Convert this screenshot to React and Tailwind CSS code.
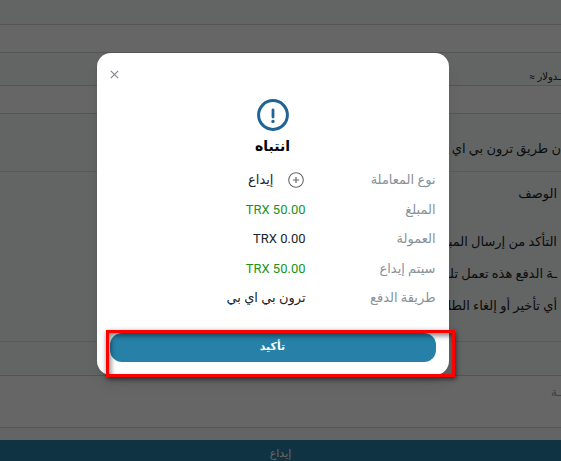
const rows = [
  { label: 'نوع المعاملة', value: 'إيداع', icon: true },
  { label: 'المبلغ', value: 'TRX 50.00', green: true },
  { label: 'العمولة', value: 'TRX 0.00' },
  { label: 'سيتم إيداع', value: 'TRX 50.00', green: true },
  { label: 'طريقة الدفع', value: 'ترون بي اي بي' },
];

const notes = ['التأكد من إرسال المبلـ', 'ـة الدفع هذه تعمل تلـ', 'أي تأخير أو إلغاء الطلب'];

const AlertIcon = () => (
  <svg width="32" height="32" viewBox="0 0 32 32" fill="none" aria-hidden="true">
    <circle cx="16" cy="16" r="14.4" stroke="#1f6496" strokeWidth="3" />
    <path d="M16 11v7" stroke="#1f6496" strokeWidth="2.8" strokeLinecap="round" />
    <circle cx="16" cy="22.4" r="1.7" fill="#1f6496" />
  </svg>
);

const PlusIcon = () => (
  <svg width="16" height="16" viewBox="0 0 16 16" fill="none" stroke="#6b6b6b" aria-hidden="true">
    <circle cx="8" cy="8" r="7.3" strokeWidth="1.1" />
    <path d="M8 5v6M5 8h6" strokeWidth="1.2" />
  </svg>
);

const CloseIcon = () => (
  <svg width="9" height="9" viewBox="0 0 9 9" fill="none" stroke="#808890" aria-hidden="true">
    <path d="M.8.8l7.4 7.4M8.2.8L.8 8.2" strokeWidth="1.2" />
  </svg>
);

const DepositForm = () => (
  <form className="text-[#212529]">
    <div className="h-6" />
    <input
      type="text"
      aria-label="المبلغ"
      className="block h-[29px] w-full border-y border-[#d0d4de] bg-white"
    />
    <label htmlFor="usd" className="flex h-8 items-end text-[10px] leading-4">
      ـدولار ≈
    </label>
    <input id="usd" type="text" className="block h-[29px] w-full border-y border-[#d0d4de] bg-white" />
    <p className="flex h-[58px] items-end border-b border-[#dfe4e4] pb-3 text-[13px] leading-5">
      ن طريق ترون بي اي بي
    </p>
    <section className="h-[170px] border-b border-[#dfe4e4] px-1 pt-3">
      <h2 className="mb-[22px] text-[13px] leading-5">الوصف</h2>
      <ul className="text-[13px] leading-8">
        {notes.map((note) => (
          <li key={note} className="whitespace-nowrap">
            {note}
          </li>
        ))}
      </ul>
    </section>
    <div className="h-[33px]" />
    <textarea
      aria-label="ملاحظة"
      placeholder="ـة"
      className="block h-[53px] w-full resize-none border-y border-[#d0d2d2] bg-white pt-2 text-xs placeholder:text-[#a0a4a8]"
    />
    <div className="h-3" />
    <button type="button" className="block h-7 w-full bg-[#2680a7] text-[11px] text-white">
      إيداع
    </button>
  </form>
);

const ConfirmDialog = () => (
  <div
    role="dialog"
    aria-modal="true"
    aria-labelledby="dialog-title"
    className="relative w-full max-w-[352px] rounded-[14px] bg-white p-[13px] shadow-lg"
  >
    <div className="flex h-[17px] items-center justify-end">
      <button type="button" aria-label="إغلاق">
        <CloseIcon />
      </button>
    </div>
    <div className="mt-4 flex flex-col items-center">
      <AlertIcon />
      <h1 id="dialog-title" className="mt-1 text-sm leading-[22px] font-bold text-black">
        انتباه
      </h1>
    </div>
    <dl className="mt-2 grid h-[148px] grid-rows-5 text-[13px]">
      {rows.map((row) => (
        <div key={row.label} className="flex items-center">
          <dt className="w-[130px] text-[#8a9299]">{row.label}</dt>
          <dd
            className={
              row.green ? 'flex items-center text-[#1a941a]' : 'flex items-center text-[#212529]'
            }
          >
            {row.icon && (
              <span className="mr-[2px] ml-[14px]">
                <PlusIcon />
              </span>
            )}
            <span dir={row.value.startsWith('TRX') ? 'ltr' : 'rtl'}>{row.value}</span>
          </dd>
        </div>
      ))}
    </dl>
    <button
      type="button"
      className="mt-5 block h-[29px] w-full rounded-xl bg-[#2680a7] text-[11px] font-bold text-white"
    >
      تأكيد
    </button>
    <div className="pointer-events-none absolute -right-[6px] -bottom-[2px] left-[9px] h-[47px] border-3 border-[#fe0000] shadow-[1px_2px_5px_rgba(0,0,0,0.6),inset_2px_3px_5px_rgba(0,0,0,0.45)]" />
  </div>
);

const App = () => (
  <main
    dir="rtl"
    className="relative h-screen overflow-hidden bg-[#f8fcfa] font-['Roboto','DejaVu_Sans',sans-serif]"
  >
    <DepositForm />
    <div className="absolute inset-0 flex items-start justify-center bg-black/60 pt-[53px] pr-4">
      <ConfirmDialog />
    </div>
  </main>
);

export default App;
